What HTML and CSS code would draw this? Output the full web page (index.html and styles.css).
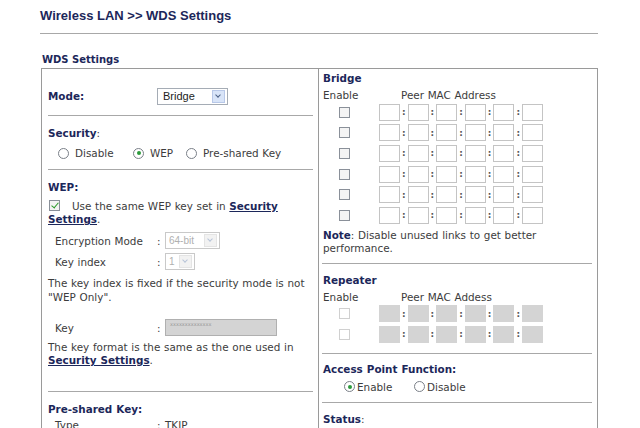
FILE: index.html
```html
<!DOCTYPE html>
<html lang="en">
<head>
    <meta charset="UTF-8">
    <title>Wireless LAN >> WDS Settings</title>
    <link rel="stylesheet" href="styles.css">
</head>
<body>
    <div class="page">
        <h1 class="title">Wireless LAN &gt;&gt; WDS Settings</h1>
        <div class="rule"></div>
        <h2 class="caption">WDS Settings</h2>

        <div class="panel">
            <!-- left column -->
            <div class="col left">
                <div class="mode-row">
                    <span class="lbl mode-lbl">Mode:</span>
                    <span class="sel sel-bridge">Bridge<span class="arrow"></span></span>
                </div>
                <div class="hr hr-mode"></div>

                <div class="sec sec-security">
                    <div class="line"><b class="lbl">Security</b>:</div>
                    <div class="line radios">
                        <span class="opt opt-dis"><span class="rb"></span>Disable</span>
                        <span class="opt opt-wep"><span class="rb on"></span>WEP</span>
                        <span class="opt"><span class="rb"></span>Pre-shared Key</span>
                    </div>
                </div>
                <div class="hr hr-sec"></div>

                <div class="sec sec-wep">
                    <div class="line"><b class="lbl">WEP:</b></div>
                    <p class="para use-same"><span class="cb on"></span>Use the same WEP key set in <a href="#">Security Settings</a>.</p>
                    <div class="field">
                        <span class="fname">Encryption Mode</span><span class="colon">:</span>
                        <span class="sel sel-dis sel-enc">64-bit<span class="arrow"></span></span>
                    </div>
                    <div class="field">
                        <span class="fname">Key index</span><span class="colon">:</span>
                        <span class="sel sel-dis sel-idx">1<span class="arrow"></span></span>
                    </div>
                    <p class="para fixed">The key index is fixed if the security mode is not "WEP Only".</p>
                    <div class="field key-field">
                        <span class="fname">Key</span><span class="colon">:</span>
                        <span class="keybox">xxxxxxxxxxxxxx</span>
                    </div>
                    <p class="para format">The key format is the same as the one used in <a href="#">Security Settings</a>.</p>
                </div>
                <div class="hr hr-wep"></div>

                <div class="sec sec-psk">
                    <div class="line"><b class="lbl">Pre-shared Key:</b></div>
                    <div class="field">
                        <span class="fname">Type</span><span class="colon">:</span>
                        <span>TKIP</span>
                    </div>
                </div>
            </div>

            <!-- right column -->
            <div class="col right">
                <div class="line bridge-head"><b class="lbl">Bridge</b></div>
                <div class="line head-row"><span class="en">Enable</span><span>Peer MAC Address</span></div>
                <div class="mac-row"><span class="cb"></span><span class="mac"><i></i>:<i></i>:<i></i>:<i></i>:<i></i>:<i></i></span></div>
                <div class="mac-row"><span class="cb"></span><span class="mac"><i></i>:<i></i>:<i></i>:<i></i>:<i></i>:<i></i></span></div>
                <div class="mac-row"><span class="cb"></span><span class="mac"><i></i>:<i></i>:<i></i>:<i></i>:<i></i>:<i></i></span></div>
                <div class="mac-row"><span class="cb"></span><span class="mac"><i></i>:<i></i>:<i></i>:<i></i>:<i></i>:<i></i></span></div>
                <div class="mac-row"><span class="cb"></span><span class="mac"><i></i>:<i></i>:<i></i>:<i></i>:<i></i>:<i></i></span></div>
                <div class="mac-row"><span class="cb"></span><span class="mac"><i></i>:<i></i>:<i></i>:<i></i>:<i></i>:<i></i></span></div>
                <p class="para note"><b class="lbl">Note</b>: Disable unused links to get better performance.</p>
                <div class="hr hr-note"></div>

                <div class="line rep-head"><b class="lbl">Repeater</b></div>
                <div class="line head-row"><span class="en">Enable</span><span>Peer MAC Addess</span></div>
                <div class="mac-row dis"><span class="cb"></span><span class="mac"><i></i>:<i></i>:<i></i>:<i></i>:<i></i>:<i></i></span></div>
                <div class="mac-row dis"><span class="cb"></span><span class="mac"><i></i>:<i></i>:<i></i>:<i></i>:<i></i>:<i></i></span></div>
                <div class="hr hr-rep"></div>

                <div class="line ap-head"><b class="lbl">Access Point Function:</b></div>
                <div class="line ap-radios">
                    <span class="opt opt-en"><span class="rb on"></span>Enable</span>
                    <span class="opt"><span class="rb"></span>Disable</span>
                </div>
                <div class="hr hr-ap"></div>

                <div class="line status-head"><b class="lbl">Status</b>:</div>
            </div>
        </div>
    </div>
</body>
</html>
```

FILE: styles.css
```css
body {
    margin: 0;
    background: #fff;
    font-family: "DejaVu Sans", Verdana, sans-serif;
    font-size: 10.4px;
    word-spacing: 0.4px;
    color: #3c3c3c;
}
.page {
    padding: 0 42px 0 40px;
}
.title {
    margin: 0;
    padding-top: 8px;
    height: 19px;
    font-family: "Liberation Sans", Arial, sans-serif;
    font-size: 13px;
    line-height: 16px;
    word-spacing: 0;
    color: #1c275a;
}
.rule {
    margin-top: 6px;
    border-top: 1px solid #a8a8a8;
}
.caption {
    margin: 20px 0 0 2px;
    font-size: 10px;
    line-height: 12px;
    height: 14px;
    word-spacing: 0;
    color: #1c275a;
}
.panel {
    margin-left: 1px;
    border: 1px solid #9a9a9a;
    display: grid;
    grid-template-columns: 277px 1fr;
    height: 362px;
    overflow: hidden;
}
.col.left {
    border-right: 1px solid #9a9a9a;
    padding: 0 5px 0 6px;
}
.col.right {
    padding: 0 4px 0 4px;
}
.lbl {
    color: #1c275a;
    font-weight: bold;
}
a {
    color: #1c275a;
    font-weight: bold;
}
.line {
    height: 14px;
    line-height: 14px;
    white-space: nowrap;
}
.para {
    margin: 0;
    line-height: 13px;
}
.hr {
    border-top: 1px solid #a8a8a8;
}
.opt {
    display: inline-flex;
    align-items: center;
}

/* left column */
.mode-row {
    margin-top: 17px;
    height: 20px;
    display: flex;
    align-items: center;
}
.mode-lbl {
    width: 109px;
}
.hr-mode { margin-top: 9px; }
.sec-security { padding-top: 10px; }
.radios {
    margin-top: 6px;
    padding-left: 10px;
    display: flex;
    align-items: center;
}
.radios .rb { margin-right: 6px; }
.opt-dis { width: 75px; }
.opt-wep { width: 53px; }
.hr-sec { margin-top: 9px; }
.sec-wep { padding-top: 10px; }
.use-same { margin-top: 6px; }
.use-same .cb { margin-right: 12px; margin-left: 1px; }
.field {
    display: flex;
    align-items: center;
    height: 21px;
    padding-left: 7px;
    white-space: nowrap;
}
.use-same + .field { margin-top: 4px; }
.fname { width: 102px; }
.colon { width: 8px; }
.fixed { margin-top: 4px; line-height: 14px; }
.key-field { margin-top: 13px; }
.format { margin-top: 3px; }
.hr-wep { margin-top: 24px; }
.sec-psk { padding-top: 10px; }
.sec-psk .field { height: 17px; }

/* fake form controls */
.sel {
    position: relative;
    display: inline-block;
    box-sizing: border-box;
    height: 17px;
    line-height: 15px;
    border: 1px solid #a5acb5;
    background: #fff;
    font-family: "Liberation Sans", Arial, sans-serif;
    font-size: 11px;
    color: #222;
    padding-left: 5px;
}
.sel-bridge { width: 71px; }
.sel .arrow {
    position: absolute;
    right: 2px;
    top: 1px;
    width: 13px;
    height: 13px;
    box-sizing: border-box;
    border: 1px solid #b8c8e8;
    background: #d8e4f8;
}
.sel .arrow::after {
    content: "";
    position: absolute;
    left: 3px;
    top: 2px;
    width: 3px;
    height: 3px;
    border-right: 1.5px solid #4d6185;
    border-bottom: 1.5px solid #4d6185;
    transform: rotate(45deg);
}
.sel-dis {
    color: #b0b0b0;
    border-color: #c9c9c9;
    font-size: 10px;
    padding-left: 3px;
}
.sel-dis .arrow {
    border-color: #e4e4e4;
    background: #f2f2f2;
}
.sel-dis .arrow::after {
    border-color: #b8c4d8;
}
.sel-enc { width: 55px; }
.sel-idx { width: 30px; }
.keybox {
    box-sizing: border-box;
    width: 112px;
    height: 17px;
    background: #d4d4d4;
    border: 1px solid #b0b0b0;
    font-size: 5px;
    line-height: 8px;
    color: #999;
    padding-left: 4px;
    overflow: hidden;
}
.cb {
    display: inline-block;
    box-sizing: border-box;
    width: 11px;
    height: 11px;
    border: 1px solid #8a9099;
    background: #f4f4f4;
    vertical-align: -1px;
    position: relative;
}
.cb.on::after {
    content: "";
    position: absolute;
    left: 3px;
    top: 0px;
    width: 3px;
    height: 6px;
    border-right: 1.5px solid #2a9a2a;
    border-bottom: 1.5px solid #2a9a2a;
    transform: rotate(40deg);
}
.rb {
    display: inline-block;
    box-sizing: border-box;
    flex: none;
    width: 11px;
    height: 11px;
    border: 1px solid #7a7f88;
    border-radius: 50%;
    background: #fff;
    position: relative;
}
.rb.on::after {
    content: "";
    position: absolute;
    left: 2.5px;
    top: 2.5px;
    width: 4px;
    height: 4px;
    border-radius: 50%;
    background: #2c9a3c;
}

/* right column */
.bridge-head { margin-top: 2px; }
.head-row { margin-top: 3px; display: flex; }
.head-row .en { width: 78px; }
.mac-row {
    height: 20.6px;
    display: flex;
    align-items: center;
}
.mac-row .cb {
    margin-left: 16px;
    margin-right: 29px;
}
.mac {
    display: flex;
    align-items: center;
    font-weight: bold;
    color: #555;
    font-size: 9px;
}
.mac i {
    display: inline-block;
    box-sizing: border-box;
    width: 21px;
    height: 17px;
    border: 1px solid #c4c4c4;
    background: #fff;
    margin-right: 2px;
}
.mac i:not(:first-child) { margin-left: 2px; }
.mac i:last-child { margin-right: 0; }
.dis .cb {
    border-color: #d0d0d0;
    background: #fff;
}
.dis .mac i {
    background: #d4d4d4;
    border-color: #d4d4d4;
}
.note { margin-top: 3px; }
.hr-note { margin: 8px 1px 0 -1px; }
.rep-head { margin-top: 9px; }
.hr-rep { margin: 8px 1px 0 -1px; }
.ap-head { margin-top: 8px; }
.ap-radios {
    margin-top: 4px;
    padding-left: 21px;
    display: flex;
    align-items: center;
}
.ap-radios .rb { margin-right: 2px; }
.opt-en { width: 70px; }
.hr-ap { margin: 8px 1px 0 -1px; }
.status-head { margin-top: 9px; }
```
